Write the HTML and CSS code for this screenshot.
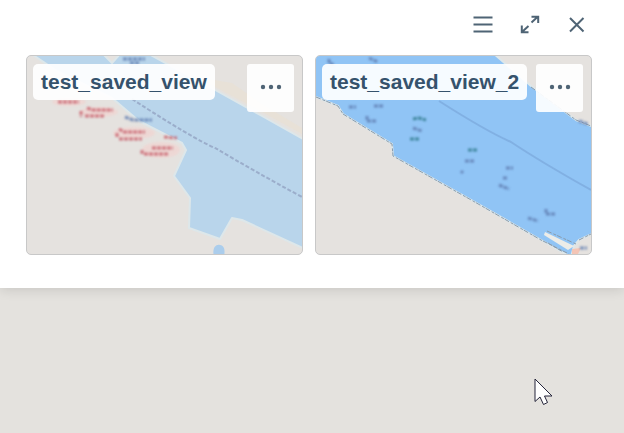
FILE: index.html
```html
<!DOCTYPE html>
<html lang="en">
<head>
<meta charset="UTF-8">
<meta name="viewport" content="width=device-width, initial-scale=1">
<title>Saved views</title>
<link rel="stylesheet" href="styles.css">
</head>
<body>
<section class="panel">
    <header class="panel-header">
        <button class="icon-button" type="button" aria-label="List">
            <svg viewBox="0 0 24 24"><path d="M2.5 5.5H21.5M2.5 12.500H21.5M2.5 19.500H21.5"/></svg>
        </button>
        <button class="icon-button" type="button" aria-label="Expand">
            <svg viewBox="0 0 24 24"><path d="M13.5 10.5L20 4.500M13.5 4.800H20.2V11M10.5 14L4 20M3.8 13.500V20.2H10.500"/></svg>
        </button>
        <button class="icon-button" type="button" aria-label="Close">
            <svg viewBox="0 0 24 24"><path d="M5 6L18.500 19.500M18.500 6L5 19.500"/></svg>
        </button>
    </header>
    <div class="views">
        <article class="view">
            <svg class="map" viewBox="0 0 275 198" preserveAspectRatio="xMidYMid slice">
                <path class="shore" d="M3 -3L30 15L85 42L112 65L155 87L159 94L147 120L163 142L162 172L193 183L205 162L215 164L278 193V84L235 60L190 35L120 -3L94 -3L85 7L75 -3Z" fill="#b9d5eb"/>
                <path d="M187 201C185 193 188 188 193 189S198 195 197 201Z" fill="#abcdec"/>
                <path d="M105 43Q165 82 190 93Q225 114 275 141" class="route"/>
                <path d="M170 21L205 40L235 56L275 78V72L235 48L205 27Z" fill="#eedfc9" opacity=".35"/>
                <!-- anchorage marks -->
                <g class="soft" fill="#f6cdca" opacity=".5">
                    <ellipse cx="42" cy="46" rx="17" ry="4"/>
                    <ellipse cx="72" cy="56" rx="19" ry="5"/>
                    <ellipse cx="107" cy="77" rx="21" ry="6"/>
                    <ellipse cx="134" cy="94" rx="19" ry="8"/>
                </g>
                <g class="marks">
                    <path d="M31 46H52M60 52L66 54H86M54 55V61M58 60H78"/>
                    <path d="M92 73L97 76H118M90 77V82M92 83H115"/>
                    <path d="M137 81L150 82M125 92H146M115 94V98M117 98H142"/>
                </g>
                <path class="marks-blue" d="M98 61L106 64H125M96 3H118M103 7H112"/>
            </svg>
            <h2 class="view-name">test_saved_view</h2>
            <button class="view-menu" type="button" aria-label="More options">
                <svg viewBox="0 0 24 24"><circle cx="4" cy="11" r="2.200"/><circle cx="12" cy="11" r="2.200"/><circle cx="20" cy="11" r="2.200"/></svg>
            </button>
        </article>
        <article class="view">
            <svg class="map" viewBox="0 0 275 198" preserveAspectRatio="xMidYMid slice">
                <path class="shore" d="M-3 -3H177L215 30L260 64L278 71V177L263 184L258 190L255 201L225 184L157 145L77 100L76 88L27 58L22 50L-3 40Z" fill="#90c4f5"/>
                <path class="coast" d="M0 41L22 50L27 58L76 88L77 100L157 145L225 184L253 198M215 31L260 64L275 70M263 184L275 178"/>
                <path d="M123 45Q170 75 195 86Q225 106 275 134" class="route faint"/>
                <path d="M229 176L258 190L252 194L228 179Z" fill="#ecece8"/>
                <path d="M231 175L260 188M232 187L247 196" class="coast"/>
                <path d="M256 193L265 192L262 198H256Z" fill="#f4c5b6"/>
                <!-- anchorage marks -->
                <g class="marks-blue">
                    <path d="M13 3V7M14 7L18 9M53 2L62 6"/>
                    <path d="M33 51H40M58 50H67M51 60V65M51 65H61"/>
                    <path d="M149 105H159M145 115L147 117M97 72L106 75"/>
                    <path d="M190 112H197M187 122H192M183 129L193 133"/>
                    <path d="M212 162L222 165M230 153V158L240 158"/>
                    <path d="M263 65L272 68M264 192H271"/>
                </g>
                <path class="marks-teal" d="M97 63L103 62L110 64M94 83H103M152 94H162"/>
            </svg>
            <h2 class="view-name">test_saved_view_2</h2>
            <button class="view-menu" type="button" aria-label="More options">
                <svg viewBox="0 0 24 24"><circle cx="4" cy="11" r="2.200"/><circle cx="12" cy="11" r="2.200"/><circle cx="20" cy="11" r="2.200"/></svg>
            </button>
        </article>
    </div>
</section>
<svg class="cursor" viewBox="0 0 20 30" aria-hidden="true"><path d="M1 1V23.500L6 19L9.500 26.500L13.500 24.500L10.500 18H18Z"/></svg>
</body>
</html>
```
FILE: styles.css
```css
* {
  box-sizing: border-box;
}

body {
  margin: 0;
  min-height: 100vh;
  background-color: #e4e2de;
  color: #35526c;
  font-family: "Liberation Sans", Arial, sans-serif;
}

.panel {
  padding: 12px 32px 33px 26px;
  background-color: #fff;
  box-shadow: 0 1px 12px rgba(0, 0, 0, 0.14);
}

.panel-header {
  display: flex;
  justify-content: flex-end;
  gap: 23px;
  padding-right: 3px;
  margin-bottom: 19px;
}

button {
  padding: 0;
  border: none;
  background: none;
  color: #4f6475;
  cursor: pointer;
}

.icon-button {
  width: 24px;
  height: 24px;
}

.icon-button svg {
  display: block;
  fill: none;
  stroke: currentColor;
  stroke-width: 2;
}

/* saved view cards */
.views {
  display: grid;
  grid-template-columns: 1fr 1fr;
  gap: 12px;
}

.view {
  position: relative;
  display: flex;
  justify-content: space-between;
  align-items: flex-start;
  height: 200px;
  padding: 8px 8px 8px 6px;
  border: 1px solid #c8c8c8;
  border-radius: 5px;
  background-color: #e5e2df;
  overflow: hidden;
}

.map {
  position: absolute;
  top: 0;
  left: 0;
  width: 100%;
  height: 100%;
}

.view-name,
.view-menu {
  position: relative;
  border-radius: 5px;
  background-color: rgba(255, 255, 255, 0.92);
}

.view-name {
  margin: 0;
  padding: 0 8px;
  font-size: 21px;
  line-height: 36px;
}

.view-menu {
  display: flex;
  flex-shrink: 0;
  justify-content: center;
  align-items: center;
  width: 47px;
  height: 48px;
  border-radius: 3px;
}

.view-menu svg {
  width: 24px;
  fill: currentColor;
}

/* map drawing */
.map path {
  stroke-linejoin: round;
}

.map .shore {
  stroke: #dde7ea;
  stroke-width: 2;
}

.coast {
  fill: none;
  stroke: #8a9bab;
  stroke-width: 1;
  stroke-dasharray: 5 2 3 1;
}

.route {
  fill: none;
  stroke: #8e9dbd;
  stroke-width: 2;
  stroke-dasharray: 4 2;
  opacity: 0.7;
}

.faint {
  stroke: #7ba8dc;
  stroke-dasharray: none;
}

.soft,
.marks,
.marks-blue,
.marks-teal {
  filter: blur(1px);
}

.marks,
.marks-blue,
.marks-teal {
  fill: none;
  stroke: #c8606c;
  stroke-width: 3;
  stroke-dasharray: 4 1;
  opacity: 0.8;
}

.marks-blue {
  stroke: #5f7cb0;
}

.marks-teal {
  stroke: #2f7a8c;
}

.cursor {
  position: absolute;
  top: 378px;
  left: 534px;
  width: 20px;
  height: 30px;
  fill: #fff;
  stroke: #25253a;
  stroke-width: 1;
}
```
